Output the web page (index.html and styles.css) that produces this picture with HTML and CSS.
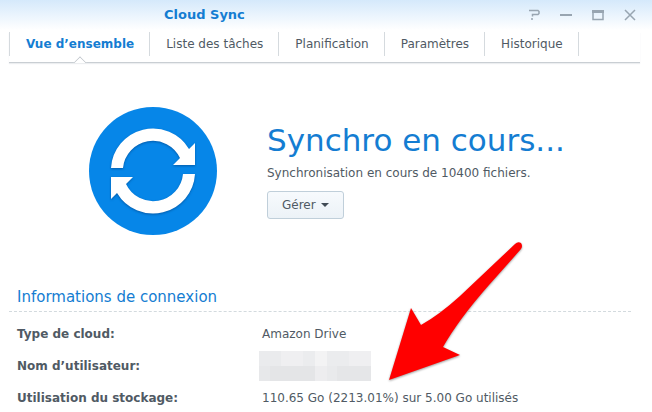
FILE: index.html
```html
<!DOCTYPE html>
<html lang="fr">
<head>
    <meta charset="UTF-8">
    <meta name="viewport" content="width=device-width, initial-scale=1.0">
    <title>Cloud Sync</title>
    <link rel="stylesheet" href="styles.css">
</head>
<body>
    <header class="titlebar">
        <h1>Cloud Sync</h1>
        <div class="window-controls">
            <button type="button" aria-label="Aide">
                <svg width="12" height="12" viewBox="0 0 12 12"><path d="M1 1.5h9l1 1v2l-1 1H4.500v2M3 10h2" /></svg>
            </button>
            <button type="button" aria-label="Réduire">
                <svg width="12" height="12" viewBox="0 0 12 12"><path class="bar" d="M0 6h12" /></svg>
            </button>
            <button type="button" aria-label="Agrandir">
                <svg width="12" height="12" viewBox="0 0 12 12"><path d="M1 1v9.500h10V1" /><path class="frame-top" d="M0 2.500h12" /></svg>
            </button>
            <button type="button" aria-label="Fermer">
                <svg width="12" height="12" viewBox="0 0 12 12"><path d="M1 1l10 10M11 1L1 11" /></svg>
            </button>
        </div>
    </header>

    <nav class="tabs">
        <a href="#overview" class="active">Vue d’ensemble</a>
        <a href="#tasks">Liste des tâches</a>
        <a href="#schedule">Planification</a>
        <a href="#settings">Paramètres</a>
        <a href="#history">Historique</a>
    </nav>

    <main>
        <!-- Sync status -->
        <section class="status">
            <svg class="status-icon" width="128" height="128" viewBox="0 0 128 128" aria-hidden="true">
                <circle cx="64" cy="64" r="64" fill="#0686e8" />
                <g class="arrows">
                    <path d="M22 61A42 42 0 0 1 100 42L106 36V58H84L91 51A30 30 0 0 0 34 61Z" />
                    <path d="M106 67A42 42 0 0 1 28 86L22 92V70H44L37 77A30 30 0 0 0 94 67Z" />
                </g>
            </svg>
            <div class="status-text">
                <h2>Synchro en cours...</h2>
                <p>Synchronisation en cours de 10400 fichiers.</p>
                <button type="button" class="manage-btn">Gérer <span class="caret"></span></button>
            </div>
        </section>

        <!-- Connection details -->
        <section class="connection">
            <h3>Informations de connexion</h3>
            <table>
                <tr>
                    <th scope="row">Type de cloud:</th>
                    <td>Amazon Drive</td>
                </tr>
                <tr>
                    <th scope="row">Nom d’utilisateur:</th>
                    <td><div class="hidden-name"></div></td>
                </tr>
                <tr>
                    <th scope="row">Utilisation du stockage:</th>
                    <td>110.65 Go (2213.01%) sur 5.00 Go utilisés</td>
                </tr>
            </table>
        </section>
    </main>

    <!-- Arrow pointing at the storage usage -->
    <svg class="pointer" width="144" height="148" viewBox="0 0 144 148" aria-hidden="true">
        <path d="M5 142L27 70L37 87Q55 77 76 58L131 6Q134 3 137 5Q139 8 137 11L105 47Q75 81 59 109L76 117Z" />
    </svg>
</body>
</html>
```

FILE: styles.css
```css
/* General Styles */
body {
    margin: 0;
    font-family: Verdana, "DejaVu Sans", sans-serif;
    font-size: 12px;
    line-height: 16px;
    color: #505a64;
    background: linear-gradient(#d5e9fb, #fff 30px) no-repeat #fff;
    overflow: hidden;
}

h1, h2, h3, p {
    margin: 0;
}

button {
    font: inherit;
    cursor: pointer;
}

/* Title bar */
.titlebar {
    display: flex;
    justify-content: space-between;
    align-items: center;
    height: 32px;
    padding: 0 16px 2px 164px;
    box-sizing: border-box;
}

h1 {
    font-size: 13px;
    color: #147dd2;
}

.window-controls {
    display: flex;
    gap: 20px;
}

.window-controls button {
    display: flex;
    padding: 0;
    border: none;
    background: none;
}

.window-controls path {
    fill: none;
    stroke: #98a5b1;
    stroke-width: 1.5;
}

.window-controls .bar {
    stroke-width: 2;
}

.window-controls .frame-top {
    stroke-width: 3;
}

/* Tabs */
.tabs {
    display: flex;
    height: 30px;
    margin: 0 12px 0 9px;
    border-bottom: 1px solid #c9ced3;
    box-shadow: 0 1px 1px #eceef0;
}

.tabs a {
    position: relative;
    height: 24px;
    padding: 0 15px 0 16px;
    line-height: 24px;
    color: #505a64;
    text-decoration: none;
    border-right: 1px solid #d5dade;
}

.tabs a:first-child {
    border-left: 1px solid #d5dade;
}

.tabs .active {
    font-weight: bold;
    color: #147dd2;
}

/* Notch under the current tab */
.tabs .active::after {
    content: "";
    position: absolute;
    left: 50%;
    bottom: -12px;
    width: 9px;
    height: 9px;
    margin-left: -5px;
    background: #fff;
    border: solid #c0c6cb;
    border-width: 1px 0 0 1px;
    transform: rotate(45deg);
    clip-path: polygon(0 0, 100% 0, 0 100%);
}

/* Status */
.status {
    display: flex;
    gap: 50px;
    padding: 44px 20px 0 89px;
}

.status-icon {
    flex: none;
}

.arrows {
    fill: #fff;
    filter: drop-shadow(0 1px 1px rgba(0, 50, 110, 0.5));
}

.status-text {
    padding-top: 13px;
}

h2 {
    font-size: 31px;
    line-height: 40px;
    font-weight: normal;
    color: #147dd2;
}

.status-text p {
    margin: 5px 0 10px;
}

.manage-btn {
    display: flex;
    align-items: center;
    gap: 5px;
    height: 28px;
    padding: 0 14px;
    color: #505a64;
    background: linear-gradient(#f7fafd, #ecf2f7);
    border: 1px solid #c0cfda;
    border-radius: 3px;
}

.caret {
    border: 4px solid transparent;
    border-top-color: #414b55;
    border-bottom: none;
}

/* Connection */
.connection {
    margin: 52px 21px 0 9px;
}

h3 {
    padding: 0 8px 4px;
    font-size: 15px;
    line-height: 20px;
    font-weight: normal;
    color: #147dd2;
    border-bottom: 1px dashed #d3dade;
}

table {
    width: 100%;
    margin-top: 6px;
    border-collapse: collapse;
}

th, td {
    height: 32px;
    padding: 0;
    text-align: left;
}

th {
    width: 245px;
    padding-left: 8px;
}

/* Masked user name */
.hidden-name {
    width: 112px;
    height: 30px;
    margin-left: -3px;
    background:
        linear-gradient(90deg, #eaebed 22px, #efeff1 22px 44px, #ebecee 44px 56px, #f3f3f4 56px 68px, #ebecee 68px 90px, #efeff1 90px) 0 0 / 100% 15px no-repeat,
        linear-gradient(90deg, #e7e8ea 11px, #e4e5e7 11px 56px, #ededef 56px 68px, #e9eaec 68px 78px, #e5e6e8 78px) 0 15px / 100% 15px no-repeat;
}

/* Pointer arrow */
.pointer {
    position: absolute;
    left: 384px;
    top: 238px;
    fill: #f00;
    filter: drop-shadow(0 1px 1px rgba(0, 0, 0, 0.4));
}
```
